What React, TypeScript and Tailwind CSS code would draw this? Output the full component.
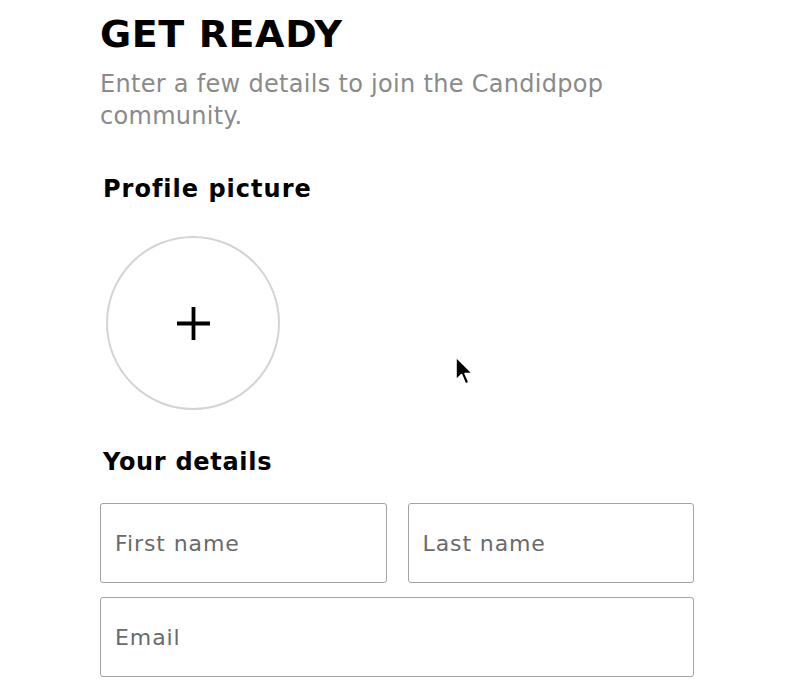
const sans = "font-['DejaVu_Sans',sans-serif]";

function Field({ placeholder, className = '' }: { placeholder: string; className?: string }) {
  return (
    <div
      className={`h-[80px] rounded-[3px] border-[1.5px] border-[#a3a3a3] bg-white flex items-center px-[14px] ${className}`}
    >
      <span className={`${sans} text-[22px] tracking-[0.9px] text-[#6a6a6a]`}>{placeholder}</span>
    </div>
  );
}

export default function App() {
  return (
    <div className="relative w-[800px] h-[696px] bg-white overflow-hidden">
      <div className="ml-[100px] w-[594px] pt-[11px]">
        {/* Header */}
        <h1 className={`${sans} font-bold text-[38px] leading-[46px] tracking-[0.6px] text-black`}>
          GET READY
        </h1>
        <p className={`${sans} mt-[11px] text-[24px] leading-[32px] tracking-[0.3px] text-[#8a8a8a] w-[520px]`}>
          Enter a few details to join the Candidpop community.
        </p>

        {/* Profile picture */}
        <h2 className={`${sans} mt-[43px] pl-[3px] font-bold text-[24px] leading-[28px] tracking-[1px] text-black`}>
          Profile picture
        </h2>
        <div className="mt-[33px] ml-[6px] w-[174px] h-[174px] rounded-full border-2 border-[#d4d4d4] flex items-center justify-center">
          <svg width="33" height="33" viewBox="0 0 33 33">
            <path d="M16.5 0 V33 M0 16.5 H33" stroke="black" strokeWidth="3.8" />
          </svg>
        </div>

        {/* Details */}
        <h2 className={`${sans} mt-[38px] pl-[3px] font-bold text-[24px] leading-[28px] tracking-[0.7px] text-black`}>
          Your details
        </h2>
        <div className="mt-[27px] flex flex-col gap-[14px]">
          <div className="grid grid-cols-2 gap-[21px]">
            <Field placeholder="First name" />
            <Field placeholder="Last name" />
          </div>
          <Field placeholder="Email" />
        </div>
      </div>

      {/* Mouse cursor */}
      <svg className="absolute left-[454px] top-[355px]" width="22" height="32" viewBox="0 0 22 32">
        <path d="M2 2 L2 25 L7.5 19.5 L11.5 29 L15 27.5 L11 18.5 L18.5 18.5 Z" fill="black" stroke="white" strokeWidth="1.6" strokeLinejoin="round" />
      </svg>
    </div>
  );
}
